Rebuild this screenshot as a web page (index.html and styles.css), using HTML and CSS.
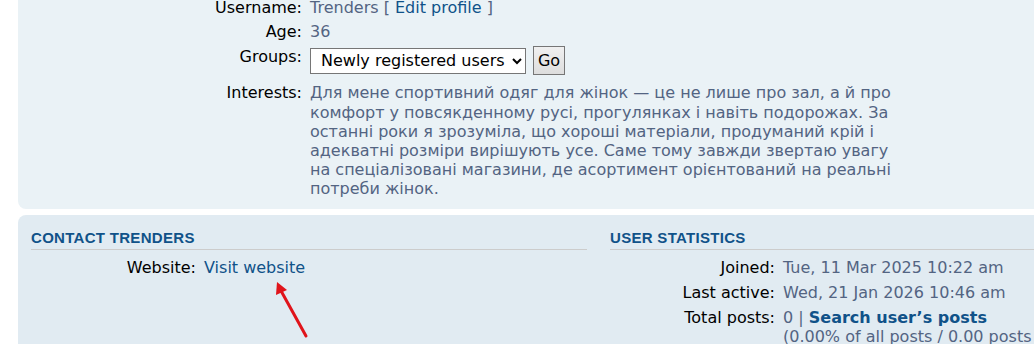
FILE: index.html
```html
<!DOCTYPE html>
<html lang="en">
<head>
    <meta charset="UTF-8">
    <meta name="viewport" content="width=device-width, initial-scale=1.0">
    <title>Viewing profile - Trenders</title>
    <link rel="stylesheet" href="styles.css">
</head>
<body>
    <div class="page">
        <div class="panel panel-profile">
            <dl class="details details-wide">
                <dt>Username:</dt>
                <dd><span class="username">Trenders</span> [ <a href="#">Edit profile</a> ]</dd>
                <dt>Age:</dt>
                <dd>36</dd>
                <dt class="groups-label">Groups:</dt>
                <dd class="groups">
                    <select class="group-select">
                        <option>Newly registered users</option>
                    </select>
                    <button class="go-button">Go</button>
                </dd>
                <dt>Interests:</dt>
                <dd class="interests">Для мене спортивний одяг для жінок — це не лише про зал, а й про комфорт у повсякденному русі, прогулянках і навіть подорожах. За останні роки я зрозуміла, що хороші матеріали, продуманий крій і адекватні розміри вирішують усе. Саме тому завжди звертаю увагу на спеціалізовані магазини, де асортимент орієнтований на реальні потреби жінок.</dd>
            </dl>
        </div>

        <div class="panel panel-columns">
            <div class="column">
                <h3>Contact Trenders</h3>
                <dl class="details">
                    <dt>Website:</dt>
                    <dd><a href="#">Visit website</a></dd>
                </dl>
            </div>
            <div class="column">
                <h3>User statistics</h3>
                <dl class="details">
                    <dt>Joined:</dt>
                    <dd>Tue, 11 Mar 2025 10:22 am</dd>
                    <dt>Last active:</dt>
                    <dd>Wed, 21 Jan 2026 10:46 am</dd>
                    <dt>Total posts:</dt>
                    <dd>0 | <a href="#" class="strong-link">Search user’s posts</a><br>(0.00% of all posts / 0.00 posts per day)</dd>
                </dl>
            </div>
            <!-- annotation arrow pointing at the website link -->
            <svg class="arrow" width="40" height="64" viewBox="0 0 40 64">
                <line x1="35" y1="60" x2="9" y2="13" stroke="#e0141b" stroke-width="3" stroke-linecap="round"/>
                <polygon points="6,6 16,14 5,19" fill="#e0141b"/>
            </svg>
        </div>
    </div>
</body>
</html>
```

FILE: styles.css
```css
body {
    margin: 0;
    padding: 0;
    background-color: #fff;
    font-family: "DejaVu Sans", Verdana, sans-serif;
    font-size: 16px;
    line-height: 1.2;
    color: #000;
    overflow: hidden;
}

a {
    color: #105289;
    text-decoration: none;
}

.page {
    width: 1240px;
    margin-top: -12px;
    padding-left: 18px;
}

.panel {
    border-radius: 8px;
    padding: 10px 13px 10px 13px;
}

.panel-profile {
    background-color: #eaf2f6;
}

.panel-columns {
    position: relative;
    margin-top: 6px;
    padding-top: 14px;
    background-color: #e1ebf2;
    display: grid;
    grid-template-columns: 556px 556px;
    column-gap: 23px;
}

.details {
    margin: 0;
    display: grid;
    grid-template-columns: 165px 1fr;
    column-gap: 8px;
    row-gap: 6px;
}

.details-wide {
    grid-template-columns: 271px 1fr;
    row-gap: 5px;
}

.details dt {
    text-align: right;
}

.details dd {
    margin: 0;
    color: #536482;
}

.username {
    color: #536482;
}

.groups-label {
    padding-top: 1px;
}

.groups {
    display: flex;
    align-items: center;
    gap: 7px;
    margin-bottom: 3px !important;
}

.group-select {
    height: 26px;
    font-family: "DejaVu Sans", Verdana, sans-serif;
    font-size: 16px;
    color: #000;
    background-color: #fff;
    border: 1px solid #767676;
    border-radius: 0;
    padding: 0 4px 0 6px;
}

.go-button {
    height: 29px;
    width: 32px;
    padding: 0;
    font-family: "DejaVu Sans", Verdana, sans-serif;
    font-size: 16px;
    color: #000;
    background: linear-gradient(#f0f0f0, #dddddd);
    border: 1px solid #767676;
    border-radius: 0;
}

.interests {
    max-width: 590px;
}

h3 {
    margin: 0 0 8px 0;
    padding-bottom: 2px;
    border-bottom: 1px solid #cccccc;
    font-family: "Liberation Sans", Arial, sans-serif;
    font-size: 15px;
    line-height: 18px;
    letter-spacing: 0.3px;
    text-transform: uppercase;
    color: #105289;
}

.strong-link {
    font-weight: bold;
}

.arrow {
    position: absolute;
    left: 253px;
    top: 61px;
}
```
